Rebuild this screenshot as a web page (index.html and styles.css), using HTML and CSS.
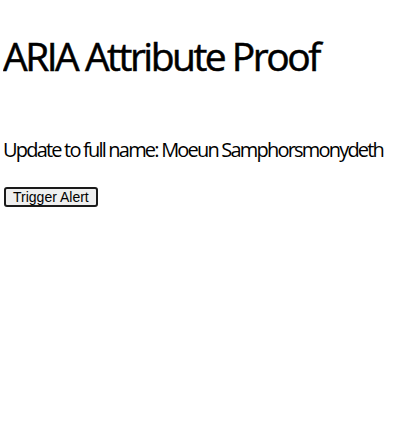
FILE: index.html
```html
<!DOCTYPE html>
<html lang="en">
<head>
<meta charset="utf-8">
<title>ARIA Attribute Proof</title>
<link rel="stylesheet" href="styles.css">
</head>
<body>
<h1 class="title">ARIA Attribute Proof</h1>
<p class="status" aria-live="polite">Update to full name: Moeun Samphorsmonydeth</p>
<button class="trigger" type="button">Trigger Alert</button>
</body>
</html>
```

FILE: styles.css
```css
body {
  margin: 0 3px;
  font-family: "Open Sans", sans-serif;
  color: #000;
  background: #fff;
}
.title {
  font-size: 39px;
  font-weight: 400;
  line-height: 53px;
  letter-spacing: -2.5px;
  -webkit-text-stroke: 0.5px #000;
  margin: 29px 0 54px;
}
.status {
  font-size: 20px;
  line-height: 27px;
  letter-spacing: -1.8px;
  margin: 0 0 24px;
}
.trigger {
  display: block;
  margin-left: 1px;
  font-family: "Liberation Sans", Arial, sans-serif;
  font-size: 14px;
  line-height: 16px;
  color: #000;
  background: #efefef;
  border: 2px solid #1a1a1a;
  border-radius: 3px;
  padding: 0 7px;
}
```
